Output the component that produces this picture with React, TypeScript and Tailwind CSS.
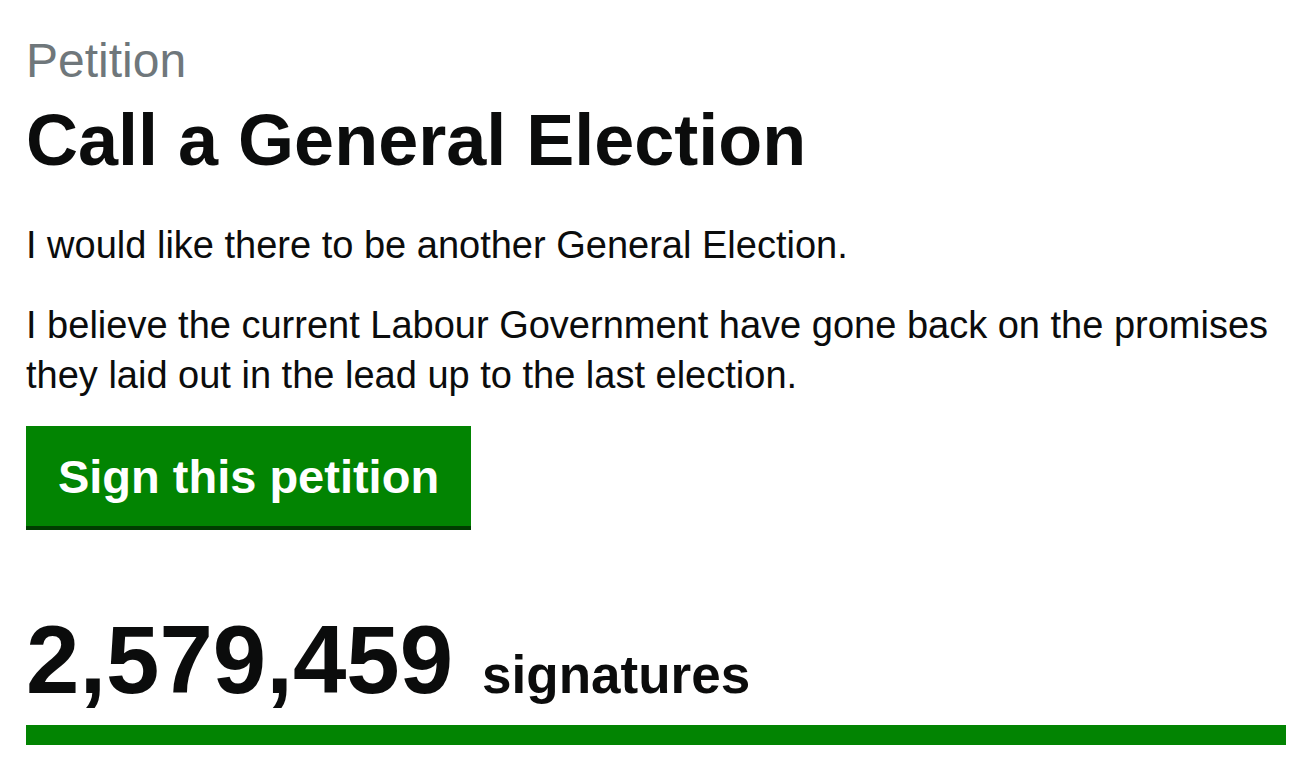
export default function App() {
  return (
    <div
      className="min-h-[782px] bg-white pt-[31px] pl-[26px] pr-[22px] text-[#0b0c0c]"
      style={{ fontFamily: '"Liberation Sans", Arial, sans-serif' }}
    >
      <span className="block text-[48px] leading-[60px] text-[#6f777b]">Petition</span>
      <h1 className="mt-[9px] mb-[40px] text-[72px] font-bold leading-[80px]">Call a General Election</h1>

      <p className="mb-[30px] text-[38px] leading-[50px]">I would like there to be another General Election.</p>
      <p className="text-[38px] leading-[50px]">
        I believe the current Labour Government have gone back on the promises they laid out in the lead up to the
        last election.
      </p>

      <button className="mt-[26px] h-[104px] w-[445px] border-b-[4px] border-[#003d00] bg-[#028402] text-[47px] font-bold leading-none text-white">
        Sign this petition
      </button>

      <div className="mt-[80px] flex items-baseline gap-[29px]">
        <span className="text-[96px] font-bold leading-[100px]">2,579,459</span>
        <span className="text-[53px] font-bold leading-none">signatures</span>
      </div>

      <div className="mt-[15px] h-[20px] w-full bg-[#028402]" />
    </div>
  );
}
